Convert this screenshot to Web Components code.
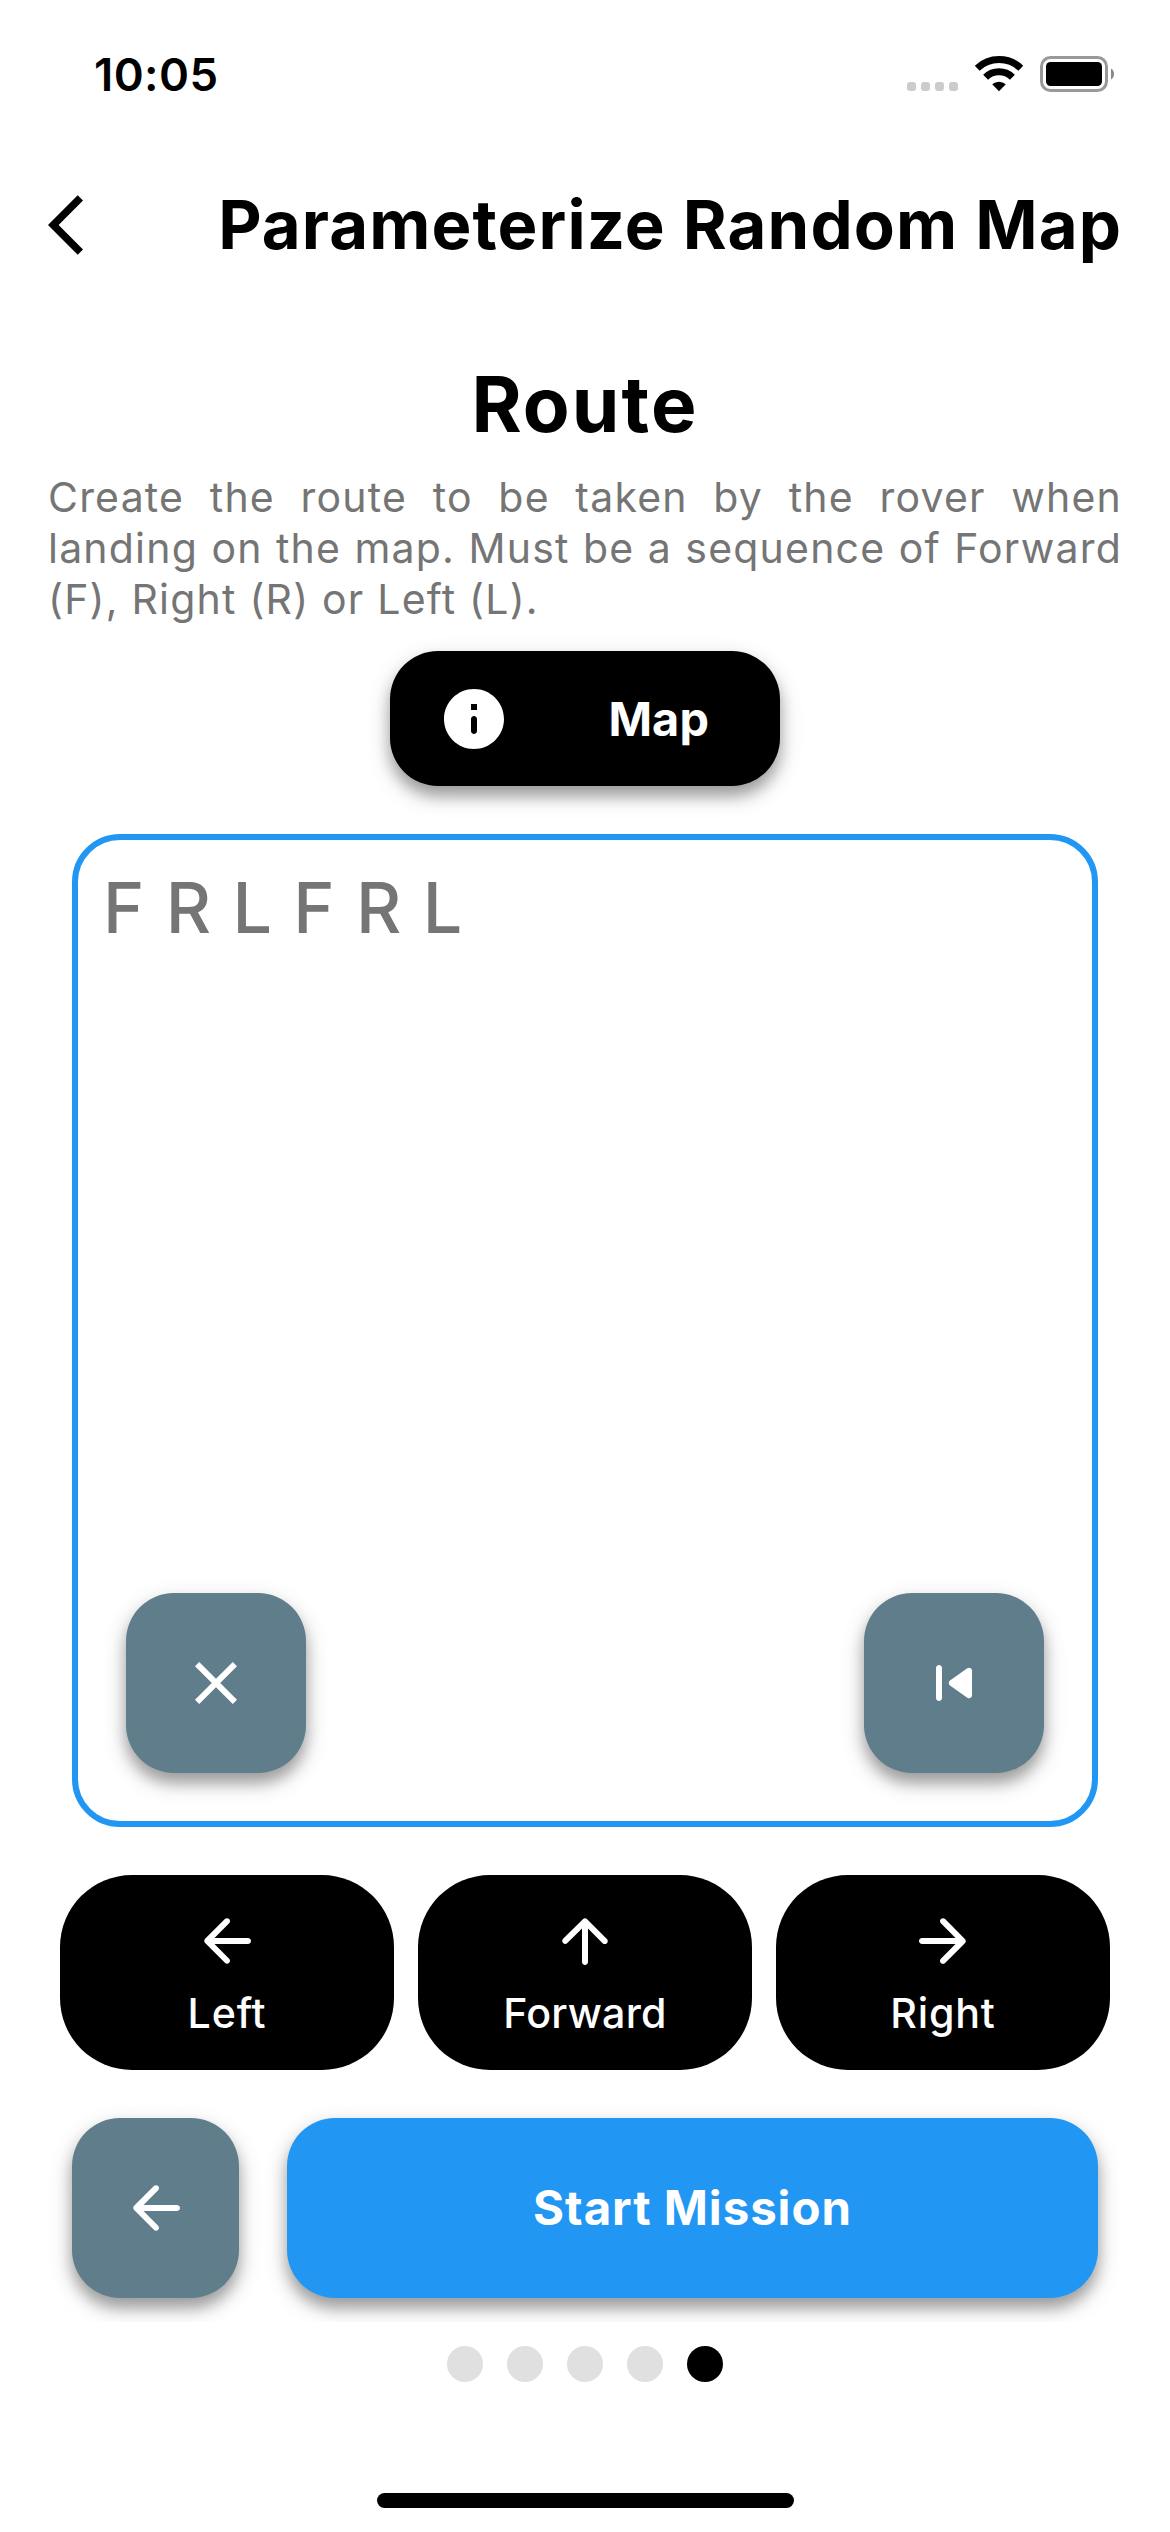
<!DOCTYPE html>
<html lang="en">
<head>
<meta charset="utf-8">
<title>Parameterize Random Map</title>
<style>
  html, body { margin: 0; background: #fff; }
  body { width: 1170px; height: 2532px; overflow: hidden; font-family: Inter, "Liberation Sans", sans-serif; color: #000; }
</style>
</head>
<body>
<rover-app></rover-app>

<script>
const ICONS = {
  chevron: 'M11.67 3.87L9.9 2.1 0 12l9.9 9.9 1.77-1.77L3.54 12z',
  info: 'M12 2C6.48 2 2 6.48 2 12s4.48 10 10 10 10-4.48 10-10S17.52 2 12 2zm0 15c-.55 0-1-.45-1-1v-4c0-.55.45-1 1-1s1 .45 1 1v4c0 .55-.45 1-1 1zm1-8h-2V7h2v2z',
  close: 'M19 6.41L17.59 5 12 10.59 6.41 5 5 6.41 10.59 12 5 17.59 6.41 19 12 13.41 17.59 19 19 17.59 13.41 12z',
  previous: 'M7 6c.55 0 1 .45 1 1v10c0 .55-.45 1-1 1s-1-.45-1-1V7c0-.55.45-1 1-1zm3.66 6.82l5.77 4.07c.66.47 1.58-.01 1.58-.82V7.93c0-.81-.91-1.28-1.58-.82l-5.77 4.07c-.57.4-.57 1.24 0 1.64z',
  left: 'M19 11H7.83l4.88-4.88c.39-.39.39-1.03 0-1.42-.39-.39-1.02-.39-1.41 0l-6.59 6.59c-.39.39-.39 1.02 0 1.41l6.59 6.59c.39.39 1.02.39 1.41 0 .39-.39.39-1.02 0-1.41L7.83 13H19c.55 0 1-.45 1-1s-.45-1-1-1z',
  right: 'M5 13h11.17l-4.88 4.88c-.39.39-.39 1.03 0 1.42.39.39 1.02.39 1.41 0l6.59-6.59c.39-.39.39-1.02 0-1.41l-6.58-6.6c-.39-.39-1.02-.39-1.41 0-.39.39-.39 1.02 0 1.41L16.17 11H5c-.55 0-1 .45-1 1s.45 1 1 1z',
  up: 'M13 19V7.83l4.88 4.88c.39.39 1.03.39 1.42 0 .39-.39.39-1.02 0-1.41l-6.59-6.59c-.39-.39-1.02-.39-1.41 0l-6.6 6.58c-.39.39-.39 1.02 0 1.41.39.39 1.02.39 1.41 0L11 7.83V19c0 .55.45 1 1 1s1-.45 1-1z'
};

/* Registers an element whose shadow root is cloned from the given markup. */
function define(name, html, setup) {
  const template = document.createElement('template');
  template.innerHTML = html;
  customElements.define(name, class extends HTMLElement {
    connectedCallback() {
      if (this.shadowRoot) return;
      const root = this.attachShadow({ mode: 'open' });
      root.append(template.content.cloneNode(true));
      if (setup) setup(this, root);
    }
  });
}

define('md-icon', `
  <style>
    :host { display: block; flex: none; width: 72px; height: 72px; }
    svg { display: block; width: 100%; height: 100%; fill: currentColor; }
  </style>
  <svg viewBox="0 0 24 24" aria-hidden="true"><path/></svg>`,
  (el, root) => root.querySelector('path').setAttribute('d', ICONS[el.getAttribute('name')]));

define('status-bar', `
  <style>
    :host { display: flex; flex: none; height: 148px; align-items: center; padding: 0 55px 0 94px; }
    time { font-size: 45.5px; line-height: 149px; font-weight: 600; letter-spacing: .4px; margin-right: auto; }
    svg { display: block; flex: none; }
  </style>
  <time>10:05</time>
  <svg width="208" height="40" viewBox="907 54 208 40" aria-hidden="true">
    <g fill="#ccc">
      <rect x="907" y="82" width="9" height="9" rx="3"/><rect x="921" y="82" width="9" height="9" rx="3"/>
      <rect x="935" y="82" width="9" height="9" rx="3"/><rect x="949" y="82" width="9" height="9" rx="3"/>
    </g>
    <path d="M977.2 68.2A31.8 31.8 0 0 1 1020.8 68.2" fill="none" stroke="#000" stroke-width="7"/>
    <path d="M985.6 77.2A19.2 19.2 0 0 1 1012.4 77.2" fill="none" stroke="#000" stroke-width="7"/>
    <path d="M992.2 84.3A10.5 10.5 0 0 1 1005.8 84.3L999 91.2Z"/>
    <rect x="1041.5" y="57.5" width="65" height="33" rx="9" fill="none" stroke="#999" stroke-width="3"/>
    <rect x="1046" y="62" width="56" height="24" rx="4.5"/>
    <path d="M1111 68.5A6.5 6.5 0 0 1 1111 79.5Z" fill="#888"/>
  </svg>`);

define('page-header', `
  <style>
    :host { display: flex; flex: none; height: 154px; align-items: center; justify-content: space-between; padding: 0 48px; }
    h1 { margin: 0; font-size: 67px; line-height: 154px; font-weight: 700; letter-spacing: 1.1px; white-space: nowrap; }
  </style>
  <md-icon name="chevron"></md-icon>
  <h1><slot></slot></h1>`);

define('step-intro', `
  <style>
    :host { display: block; flex: none; padding: 37px 48px 0; }
    h2 { margin: 0 0 2px; text-align: center; font-size: 76.5px; line-height: 131px; font-weight: 700; letter-spacing: 2.1px; }
    p { margin: 0; color: #757575; font-size: 41px; line-height: 51px; font-weight: 400; letter-spacing: 1.21px; text-align: justify; }
  </style>
  <h2><slot name="title"></slot></h2>
  <p><slot></slot></p>`);

define('raised-button', `
  <style>
    :host {
      display: flex; flex: none; box-sizing: border-box; align-items: center; justify-content: center;
      width: 180px; height: 180px; border-radius: 48px; color: #fff; background: #607d8b;
      font-size: 46.8px; font-weight: 700; line-height: 60px; white-space: nowrap;
      box-shadow: 0 10px 14px rgba(0,0,0,.26), 0 9px 24px rgba(0,0,0,.2);
    }
    :host([wide]) { flex: 1; width: auto; background: #2196f3; font-size: 47.4px; letter-spacing: .95px; }
    :host([narrow]) { width: 167px; }
    :host([pill]) { width: 390px; height: 135px; background: #000; align-self: center; justify-content: space-between; padding: 0 71px 0 48px; letter-spacing: .1px; }
  </style>
  <slot></slot>`);

define('route-field', `
  <style>
    :host {
      display: flex; flex: none; flex-direction: column; justify-content: space-between; box-sizing: border-box;
      height: 993px; margin: 48px 72px 0; border: 6px solid #2196f3; border-radius: 48px; padding: 20px 48px 48px;
    }
    p { margin: 0 -23px; color: #757575; font-size: 70px; line-height: 95px; font-weight: 500; letter-spacing: 1.36px; }
    div { display: flex; justify-content: space-between; }
  </style>
  <p><slot name="value"></slot></p>
  <div><slot></slot></div>`);

define('move-button', `
  <style>
    :host {
      display: flex; flex: 1; box-sizing: border-box; flex-direction: column; align-items: center; height: 195px;
      padding-top: 30px; border-radius: 72px; background: #000; color: #fff;
      font-size: 41.2px; line-height: 50px; font-weight: 500; letter-spacing: var(--tracking, .8px);
    }
    span { margin-top: 11px; }
  </style>
  <md-icon></md-icon><span><slot></slot></span>`,
  (el, root) => {
    const icon = document.createElement('md-icon');
    icon.setAttribute('name', el.getAttribute('icon'));
    root.querySelector('md-icon').replaceWith(icon);
  });

define('button-row', `
  <style>
    :host { display: flex; flex: none; margin-top: 48px; gap: 24px; padding: 0 60px; }
    :host([actions]) { gap: 48px; margin-top: 0; padding: 48px 72px 24px; overflow: hidden; }
  </style>
  <slot></slot>`);

define('page-dots', `
  <style>
    :host { display: flex; flex: none; justify-content: center; gap: 24px; margin-top: 24px; }
    i { width: 36px; height: 36px; border-radius: 50%; background: #e0e0e0; }
    i.on { background: #000; }
  </style>`,
  (el, root) => {
    for (let n = 1; n <= +el.getAttribute('count'); n++) {
      const dot = document.createElement('i');
      if (n === +el.getAttribute('current')) dot.className = 'on';
      root.append(dot);
    }
  });

define('home-indicator', `
  <style>:host { display: block; flex: none; width: 417px; height: 15px; border-radius: 8px; background: #000; margin: auto auto 24px; }</style>`);

define('rover-app', `
  <style>
    :host { display: flex; flex-direction: column; width: 1170px; height: 2532px; }
    .map { display: flex; justify-content: center; margin-top: 26px; }
  </style>
  <status-bar></status-bar>
  <page-header>Parameterize Random Map</page-header>
  <step-intro><span slot="title">Route</span>Create the route to be taken by the rover when landing on the map. Must be a sequence of Forward (F), Right (R) or Left (L).</step-intro>
  <div class="map"><raised-button pill><md-icon name="info"></md-icon><span>Map</span></raised-button></div>
  <route-field>
    <span slot="value">F R L F R L</span>
    <raised-button><md-icon name="close"></md-icon></raised-button>
    <raised-button><md-icon name="previous"></md-icon></raised-button>
  </route-field>
  <button-row>
    <move-button icon="left">Left</move-button>
    <move-button icon="up" style="--tracking:.2px">Forward</move-button>
    <move-button icon="right">Right</move-button>
  </button-row>
  <button-row actions>
    <raised-button narrow><md-icon name="left"></md-icon></raised-button>
    <raised-button wide>Start Mission</raised-button>
  </button-row>
  <page-dots count="5" current="5"></page-dots>
  <home-indicator></home-indicator>`);
</script>
</body>
</html>
